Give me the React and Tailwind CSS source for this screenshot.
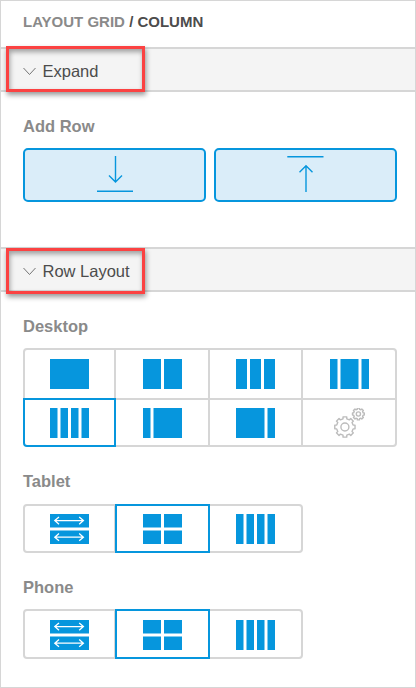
import React from 'react';

const BLUE = '#0696dd';

// Builds a closed outline of a cog wheel with its first tooth pointing up.
function gearPath(cx, cy, outer, inner, teeth) {
  const step = 360 / teeth;
  const offsets = [
    [-0.29, inner],
    [-0.23, outer],
    [0.23, outer],
    [0.29, inner],
  ];
  const points = [];
  for (let i = 0; i < teeth; i++) {
    for (const [o, r] of offsets) {
      const a = ((i + o) * step - 90) * (Math.PI / 180);
      points.push(`${(cx + r * Math.cos(a)).toFixed(2)} ${(cy + r * Math.sin(a)).toFixed(2)}`);
    }
  }
  return `M${points.join('L')}Z`;
}

const bars = (list) => list.map(([x, w]) => [x, 0, w, 30]);

const ICONS = {
  one: bars([[0, 39]]),
  two: bars([[0, 18], [21, 18]]),
  three: bars([[0, 11], [14, 11], [28, 11]]),
  center: bars([[0, 7.5], [10.5, 18], [31.5, 7.5]]),
  four: bars([[0, 7.5], [10.5, 7.5], [21, 7.5], [31.5, 7.5]]),
  left: bars([[0, 7.5], [10.5, 28.5]]),
  right: bars([[0, 28.5], [31.5, 7.5]]),
  quad: [[0, 0, 18, 13.5], [21, 0, 18, 13.5], [0, 16.5, 18, 13.5], [21, 16.5, 18, 13.5]],
  stack: [[0, 0, 39, 13.5], [0, 16.5, 39, 13.5]],
};

function LayoutIcon({ name }) {
  if (name === 'gears') {
    return (
      <svg width="39" height="30" viewBox="0 0 39 30" fill="none" stroke="#bcbcbc" strokeWidth="1.4" strokeLinejoin="round">
        <path d={gearPath(14.9, 19, 10.3, 8.4, 8)} />
        <circle cx="14.9" cy="19" r="4" />
        <path d={gearPath(28.4, 6, 6, 4.9, 8)} />
        <circle cx="28.4" cy="6" r="2.1" />
      </svg>
    );
  }
  return (
    <svg width="39" height="30" viewBox="0 0 39 30">
      {ICONS[name].map(([x, y, w, h], i) => (
        <rect key={i} x={x} y={y} width={w} height={h} fill={BLUE} />
      ))}
      {name === 'stack' && (
        <g fill="none" stroke="#fff" strokeWidth="1.3">
          <path d="M4.8 6.6H33.4M9 3L4.8 6.6L9 10.2M29.2 3L33.4 6.6L29.2 10.2" />
          <path d="M4.8 23.2H33.4M9 19.6L4.8 23.2L9 26.8M29.2 19.6L33.4 23.2L29.2 26.8" />
        </g>
      )}
    </svg>
  );
}

function Cell({ icon, selected, className }) {
  return (
    <button
      className={`flex shrink-0 items-start border-2 ${selected ? 'relative z-10 border-[#0696dd]' : 'border-[#d6d6d6]'} ${className}`}
    >
      <LayoutIcon name={icon} />
    </button>
  );
}

function SectionBar({ title, className, boxClass }) {
  return (
    <div className={`flex h-[45px] border-y-2 border-[#d6d6d6] bg-[#f4f4f4] ${className}`}>
      <div
        className={`relative ml-[5px] flex h-[46px] w-[139px] shrink-0 items-center border-[3px] border-[#fb4242] pl-[14px] shadow-[1px_3px_5px_rgba(0,0,0,0.4),inset_1px_3px_5px_rgba(0,0,0,0.35)] ${boxClass}`}
      >
        <svg width="13" height="9" viewBox="0 0 13 9" fill="none" stroke="#747474" strokeWidth="1">
          <path d="M0.5 1L6.5 7.5L12.5 1" />
        </svg>
        <span className="ml-[6.5px] whitespace-nowrap text-[16.5px] leading-5 text-[#4c4c4c]">{title}</span>
      </div>
    </div>
  );
}

function Label({ children, className }) {
  return <h3 className={`ml-[22px] h-5 text-[16.5px] font-bold leading-5 text-[#8a8a8a] ${className}`}>{children}</h3>;
}

function DeviceRow({ cellClass }) {
  return (
    <div className="ml-[22px] flex">
      <Cell icon="stack" className={`w-[93px] rounded-l-[4px] pl-[25px] ${cellClass}`} />
      <Cell icon="quad" selected className={`-ml-px w-[95px] pl-[26px] ${cellClass}`} />
      <Cell icon="four" className={`-ml-[2px] w-[95px] rounded-r-[4px] pl-[26px] ${cellClass}`} />
    </div>
  );
}

export default function App() {
  return (
    <main className="h-[688px] w-[416px] overflow-hidden border border-[#d6d6d6] bg-white font-['Liberation_Sans',Arial,sans-serif]">
      <header className="flex h-[46px] items-center pl-[22px] text-[15px] font-bold leading-5 text-[#8a8a8a]">
        <span className="-mt-[5px] whitespace-pre">
          LAYOUT GRID <span className="text-[#4c4c4c]">/ COLUMN</span>
        </span>
      </header>

      <SectionBar title="Expand" boxClass="-mt-[3px] pt-[4px]" />
      <Label className="mt-[24px]">Add Row</Label>
      <div className="ml-[22px] mt-[12px] flex gap-2">
        <button className="h-[54px] w-[183px] rounded-[5px] border-2 border-[#0696dd] bg-[#daedf9]">
          <svg width="179" height="50" viewBox="0 0 179 50" fill="none" stroke={BLUE} strokeWidth="1.4">
            <path d="M90.5 6V32M84 25.5L90.5 32L97 25.5M72 41.2H108" />
          </svg>
        </button>
        <button className="h-[54px] w-[183px] rounded-[5px] border-2 border-[#0696dd] bg-[#daedf9]">
          <svg width="179" height="50" viewBox="0 0 179 50" fill="none" stroke={BLUE} strokeWidth="1.4">
            <path d="M90 42V16M83.5 22.3L90 15.8L96.5 22.3M71.3 6.7H107.5" />
          </svg>
        </button>
      </div>

      <SectionBar title="Row Layout" className="mt-[45px]" boxClass="-mt-[1px]" />
      <Label className="mt-[24px]">Desktop</Label>
      <div className="ml-[22px] mt-[12px] flex">
        <Cell icon="one" className="h-[52px] w-[93px] rounded-tl-[4px] pl-[25px] pt-[9px]" />
        <Cell icon="two" className="-ml-[2px] h-[52px] w-[96px] pl-[27px] pt-[9px]" />
        <Cell icon="three" className="-ml-[2px] h-[52px] w-[95px] pl-[26px] pt-[9px]" />
        <Cell icon="center" className="-ml-[2px] h-[52px] w-[96px] rounded-tr-[4px] pl-[27px] pt-[9px]" />
      </div>
      <div className="-mt-[2px] ml-[22px] flex">
        <Cell icon="four" selected className="h-[49px] w-[93px] rounded-bl-[4px] pl-[25px] pt-[8px]" />
        <Cell icon="left" className="-ml-[2px] h-[49px] w-[96px] pl-[27px] pt-[8px]" />
        <Cell icon="right" className="-ml-[2px] h-[49px] w-[95px] pl-[26px] pt-[8px]" />
        <Cell icon="gears" className="-ml-[2px] h-[49px] w-[96px] rounded-br-[4px] pl-[27px] pt-[8px]" />
      </div>

      <Label className="mb-[13px] mt-[24px]">Tablet</Label>
      <DeviceRow cellClass="h-[49px] pt-[8px]" />

      <Label className="mb-[12px] mt-[24px]">Phone</Label>
      <DeviceRow cellClass="h-[50px] pt-[9px]" />
    </main>
  );
}
